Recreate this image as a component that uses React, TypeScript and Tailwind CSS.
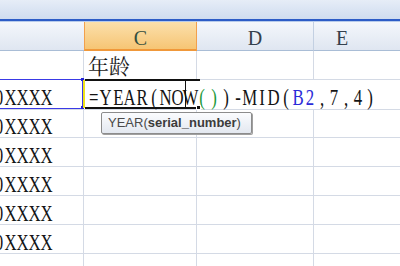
import React from "react";

const serif = { fontFamily: '"Liberation Serif", "Noto Sans CJK SC", serif' };

// SimSun-like half-width glyphs: every character gets a 12px slot
function Mono({ text, className = "" }: { text: string; className?: string }) {
  return (
    <>
      {text.split("").map((ch, i) => (
        <span key={i} className={`inline-flex w-[12px] justify-center ${className}`}>
          <span className="inline-block scale-x-[0.7]">{ch}</span>
        </span>
      ))}
    </>
  );
}

const ROWS = 8;

export default function App() {
  return (
    <div className="relative w-[400px] h-[266px] overflow-hidden bg-white" style={serif}>
      <div className="h-[19px] bg-linear-to-b from-[#e6edf7] to-[#cfdcef]" />
      <div className="h-[2px] bg-[#2c5cc6]" />
      <div className="h-px bg-[#b7cbeb]" />

      {/* column headers */}
      <div className="grid grid-cols-[84px_113px_117px_1fr] h-[29px] text-[20px] leading-none text-[#34404c]">
        <div className="bg-linear-to-b from-[#f4f7fb] to-[#dfe6f1] border-b border-[#a9bdd6]" />
        <div className="flex justify-center items-start pt-[6px] bg-linear-to-b from-[#fbe0ab] to-[#f6c574] border-x border-[#f2a04c] border-b-2 border-b-[#f0983a] text-[#34503f]">
          C
        </div>
        <div className="flex justify-center items-start pt-[6px] bg-linear-to-b from-[#f4f7fb] to-[#dfe6f1] border-r border-[#c3d0e2] border-b border-b-[#a9bdd6]">
          D
        </div>
        <div className="flex justify-center items-start pt-[6px] pr-[30px] bg-linear-to-b from-[#f4f7fb] to-[#dfe6f1] border-b border-[#a9bdd6]">
          E
        </div>
      </div>

      {/* rows */}
      {Array.from({ length: ROWS }).map((_, r) => {
        const row = r + 2;
        const hasId = row >= 3 && row <= 8;
        return (
          <div key={row} className="grid grid-cols-[84px_113px_117px_1fr] h-[29px] text-[24px] leading-none text-[#141414]">
            <div className="flex justify-end items-start pt-[5px] pr-[30px] overflow-hidden border-r border-b border-[#d4dae5]">
              {hasId && <span className="flex shrink-0"><Mono text="10XXXX" /></span>}
            </div>
            {row === 3 ? (
              <div className="col-span-3 flex items-start pt-[5px] pl-[4px] border-b border-[#d4dae5] whitespace-nowrap">
                <Mono text="=YEAR(NOW" />
                <Mono text="()" className="text-[#1e9a3a]" />
                <Mono text=")-MID(" />
                <Mono text="B2" className="text-[#2b2bd8]" />
                <Mono text=",7,4)" />
              </div>
            ) : (
              <>
                <div
                  className="flex items-start pt-[4px] pl-[4px] border-r border-b border-[#d4dae5] text-[21px] text-[#1a1a1a]"
                  style={{ fontFamily: '"Noto Serif CJK SC", "Noto Sans CJK SC", serif' }}
                >
                  {row === 2 && "年龄"}
                </div>
                <div className="border-r border-b border-[#d4dae5]" />
                <div className="border-b border-[#d4dae5]" />
              </>
            )}
          </div>
        );
      })}

      {/* reference highlight on B3 */}
      <div className="absolute left-[-4px] top-[79px] w-[87px] h-[30px] border border-[#3a3ae6]" />
      <div className="absolute left-[81px] top-[78px] w-[3px] h-[3px] bg-[#2424d8]" />
      <div className="absolute left-[81px] top-[106px] w-[3px] h-[3px] bg-[#2424d8]" />
      <div className="absolute left-[83px] top-[80px] w-[2px] h-[28px] bg-[#efe21a]" />

      {/* active cell C3 in edit mode */}
      <div className="absolute left-[85px] top-[79px] w-[115px] h-[2px] bg-[#111]" />
      <div className="absolute left-[85px] top-[107px] w-[111px] h-[2px] bg-[#111]" />
      <div className="absolute left-[196px] top-[105px] w-[5px] h-[5px] bg-[#111] border border-white" />
      <div className="absolute left-[185px] top-[80px] w-px h-[28px] bg-[#111]" />

      {/* function tooltip */}
      <div
        className="absolute left-[101px] top-[112px] w-[151px] h-[22px] flex items-center pl-[6px] rounded-[2px] border border-[#8c8c8c] bg-linear-to-b from-[#fbfcfe] to-[#e3e8f0] shadow-[1px_1px_0_#a0a0a0] text-[13px] text-[#4a4a4a] whitespace-nowrap"
        style={{ fontFamily: '"Liberation Sans", Arial, sans-serif' }}
      >
        YEAR(<b className="font-bold text-[#3c3c3c]">serial_number</b>)
      </div>
    </div>
  );
}
